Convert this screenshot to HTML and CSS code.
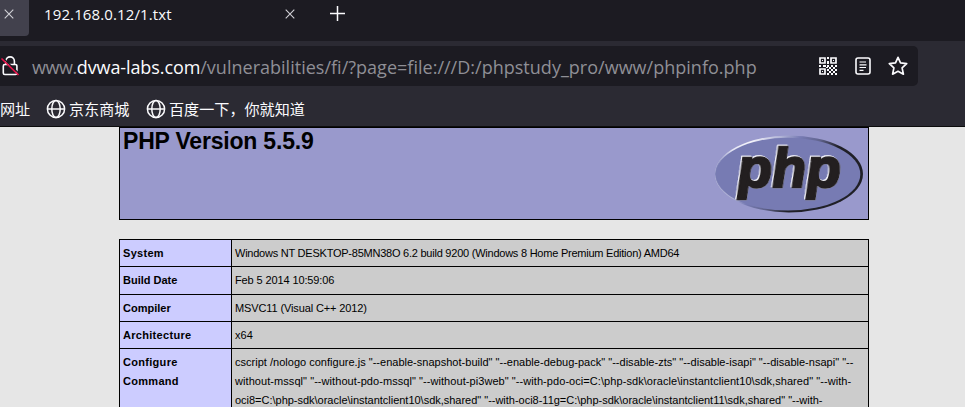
FILE: index.html
```html
<!DOCTYPE html>
<html lang="zh-CN">
<head>
<meta charset="utf-8">
<title>phpinfo()</title>
<link rel="stylesheet" href="styles.css">
</head>
<body>
<header class="browser">
  <div class="tabs">
    <div class="tab tab-active"><svg class="close" viewBox="0 0 10 10"><path d="M.7.7l8.6 8.6M9.3.7L.7 9.3"/></svg></div>
    <div class="tab tab-idle"><span class="tab-title">192.168.0.12/1.txt</span><svg class="close" viewBox="0 0 10 10"><path d="M.7.7l8.6 8.6M9.3.7L.7 9.3"/></svg></div>
    <svg class="plus" viewBox="0 0 15 15"><path d="M7.5 0v15M0 7.5h15"/></svg>
  </div>
  <div class="toolbar">
    <div class="address">
      <svg class="lock" viewBox="0 0 20 22"><path class="ink" d="M5.8 9V6.2a4.3 4.3 0 0 1 8.600 0V9M4.800 9.500h10.600a1.500 1.500 0 0 1 1.500 1.500v7a1.500 1.500 0 0 1-1.500 1.500h-10.600a1.500 1.500 0 0 1-1.500-1.500v-7a1.500 1.500 0 0 1 1.500-1.500z"/><path class="gap" d="M2.500 2.500l17 16.500"/><path class="cut" d="M1.500 3.500l17 16.500"/></svg>
      <div class="url"><span class="scheme">www.</span><span class="host">dvwa-labs.com</span><span class="path">/vulnerabilities/fi/?page=file:///D:/phpstudy_pro/www/phpinfo.php</span></div>
      <svg class="qr" viewBox="0 0 18 18"><g class="frame"><path d="M1 1h5v5H1zM12 1h5v5h-5zM1 12h5v5H1z"/></g><path class="dots" d="M3 3h1v1H3zM14 3h1v1h-1zM3 14h1v1H3zM8 0h2v2H8zM8 4h2v3H8zM0 8h2v2H0zM4 8h3v2H4zM8 8h2v2H8zM12 8h2v2h-2zM16 8h2v2h-2zM10 10h2v2h-2zM14 10h2v2h-2zM8 12h2v2H8zM12 12h2v2h-2zM16 12h2v2h-2zM10 14h2v2h-2zM14 14h2v2h-2zM8 16h2v2H8zM12 16h2v2h-2zM16 16h2v2h-2zM7 10h2v1H7z"/></svg>
      <svg class="reader" viewBox="0 0 16 18"><rect x="1" y="1" width="14" height="16" rx="2"/><path d="M4.500 5h6.500M4.500 7.800h7M4.500 10.500h6.500M4.500 13.300h4"/></svg>
      <svg class="star" viewBox="0 0 20 20"><path d="M10 1.300l2.500 5.600 6.200.7-4.600 4.200 1.300 6.400L10 15.300l-5.400 2.900 1.300-6.400L1.300 7.600l6.200-.7z"/></svg>
    </div>
    <nav class="bookmarks">
      <span class="bm bm1">网址</span>
      <span class="bm bm2"><svg class="globe" viewBox="0 0 20 20"><circle cx="10" cy="10" r="8.600"/><ellipse cx="10" cy="10" rx="4.200" ry="8.600"/><path d="M1.400 10h17.200"/></svg>京东商城</span>
      <span class="bm bm3"><svg class="globe" viewBox="0 0 20 20"><circle cx="10" cy="10" r="8.600"/><ellipse cx="10" cy="10" rx="4.200" ry="8.600"/><path d="M1.400 10h17.200"/></svg>百度一下，你就知道</span>
    </nav>
  </div>
</header>
<main class="page">
  <section class="banner">
    <h1>PHP Version 5.5.9</h1>
    <svg class="logo" viewBox="0 0 150 80">
      <defs>
        <linearGradient id="rim" gradientUnits="userSpaceOnUse" x1="20" y1="0" x2="120" y2="80"><stop offset="0" stop-color="#d8daee"/><stop offset=".14" stop-color="#f4f4fb"/><stop offset=".3" stop-color="#b0b3d6"/><stop offset=".42" stop-color="#777bb3"/><stop offset=".55" stop-color="#62658f"/><stop offset=".7" stop-color="#202027"/><stop offset="1" stop-color="#202027"/></linearGradient>
        <linearGradient id="fade" x1="0" y1="0" x2="1" y2="0"><stop offset="0" stop-color="#8185ba"/><stop offset=".12" stop-color="#8185ba" stop-opacity="0"/></linearGradient>
      </defs>
      <ellipse cx="75" cy="40" rx="74" ry="38.500" fill="url(#rim)"/>
      <ellipse cx="75" cy="40" rx="74" ry="38.500" fill="url(#fade)"/>
      <ellipse cx="74" cy="40.200" rx="72.300" ry="36.400" fill="#777bb3"/>
      <text class="word" transform="translate(24.500 53) skewX(3)" textLength="103" lengthAdjust="spacingAndGlyphs">php</text>
    </svg>
  </section>
  <table class="info">
    <tr><th class="wide">System</th><td class="system">Windows NT DESKTOP-85MN38O 6.2 build 9200 (Windows 8 Home Premium Edition) AMD64</td></tr>
    <tr class="tall"><th>Build Date</th><td class="snug">Feb 5 2014 10:59:06</td></tr>
    <tr><th>Compiler</th><td class="snug">MSVC11 (Visual C++ 2012)</td></tr>
    <tr><th class="wide">Architecture</th><td>x64</td></tr>
    <tr><th class="wide">Configure<br>Command</th><td>cscript /nologo configure.js "--enable-snapshot-build" "--enable-debug-pack" "--disable-zts" "--disable-isapi" "--disable-nsapi" "--<br><span class="loose">without-mssql" "--without-pdo-mssql" "--without-pi3web" "--with-pdo-oci=C:\php-sdk\oracle\instantclient10\sdk,shared" "--with-</span><br><span class="close-set">oci8=C:\php-sdk\oracle\instantclient10\sdk,shared" "--with-oci8-11g=C:\php-sdk\oracle\instantclient11\sdk,shared" "--with-</span></td></tr>
  </table>
</main>
</body>
</html>
```
FILE: styles.css
```css
* { box-sizing: border-box; }
html, body { height: 407px; overflow: hidden; }
body { margin: 0; background: #e6e6e6; color: #000; font-family: "Liberation Sans", sans-serif; }
svg { display: block; flex: none; fill: none; stroke: #fbfbfe; overflow: visible; }
.browser { height: 127px; background: #2b2a33; border-bottom: 1px solid #0c0c0d; color: #fbfbfe; font-family: "Open Sans", "Noto Sans CJK SC", sans-serif; }
.tabs { height: 41px; background: #1c1b22; display: flex; align-items: flex-start; }
.tab { display: flex; align-items: center; }
.tab-active { width: 29px; height: 36px; padding: 0 0 8px 4px; background: #42414d; border-radius: 0 0 4px 0; }
.tab-idle { width: 266px; height: 28px; padding-left: 15px; justify-content: space-between; }
.tab-title { font-size: 15px; line-height: 20px; letter-spacing: .12px; white-space: nowrap; }
.close { width: 10px; height: 10px; stroke: #d0d0d6; stroke-width: 1.1; }
.plus { width: 15px; height: 15px; margin: 6px 0 0 35px; stroke-width: 1.5; }
.toolbar { padding-top: 5px; }
.address { width: 918px; height: 40px; background: #1c1b22; border-radius: 0 5px 5px 0; display: flex; align-items: center; }
.lock { width: 20px; height: 22px; margin-right: 12px; }
.lock path { stroke-width: 1.6; }
.lock .gap { stroke: #1c1b22; stroke-width: 1.4; }
.lock .cut { stroke: #e8134b; stroke-width: 1.7; }
.url { width: 787px; padding-top: 1px; font-size: 18px; line-height: 24px; white-space: nowrap; color: #8f8f96; }
.scheme { letter-spacing: -.45px; }
.host { color: #fbfbfe; letter-spacing: -.1px; }
.path { letter-spacing: .015px; }
.qr { width: 18px; height: 18px; }
.qr .frame { stroke-width: 1.7; }
.qr .dots { fill: #fbfbfe; stroke: none; }
.reader { width: 16px; height: 18px; margin-left: 18px; stroke-width: 1.6; }
.reader path { stroke-width: 1.2; }
.star { width: 20px; height: 20px; margin-left: 17px; stroke-width: 1.7; stroke-linejoin: round; }
.bookmarks { height: 40px; padding-top: 4px; display: flex; align-items: center; font-family: "Noto Sans CJK SC", sans-serif; font-size: 15.1px; line-height: 22px; white-space: nowrap; }
.bm { display: flex; align-items: center; }
.bm1 { width: 46px; }
.bm2 { width: 100px; }
.globe { width: 20px; height: 20px; margin: 2px 3px 0 0; stroke-width: 1.5; }
.page { width: 750px; margin-left: 119px; }
.banner { height: 93px; border: 1px solid #000; background: #9999cc; display: flex; justify-content: space-between; padding: 0 4px 0 3px; }
h1 { margin: 0; font-size: 23px; line-height: 27px; letter-spacing: -.2px; white-space: nowrap; }
.logo { width: 150px; height: 80px; margin-top: 6px; }
.logo ellipse { stroke: none; }
.word { font: italic bold 55px "Liberation Sans", sans-serif; fill: #231f20; stroke: #231f20; stroke-width: 2.6px; filter: drop-shadow(.7px .7px 0 #f4f4fa) drop-shadow(-.7px -.7px 0 #f4f4fa); }
.info { width: 750px; margin-top: 19px; border-collapse: collapse; table-layout: fixed; font-size: 11px; line-height: 19px; }
th, td { border: 1px solid #000; padding: 4px 3px 3px; vertical-align: top; text-align: left; white-space: nowrap; }
th { width: 112px; background: #ccccff; }
td { background: #cccccc; letter-spacing: .015px; }
.tall th, .tall td { padding-bottom: 4px; }
.wide { letter-spacing: .3px; }
.system { letter-spacing: -.235px; }
.snug { letter-spacing: -.12px; }
.loose { letter-spacing: .065px; }
.close-set { letter-spacing: -.015px; }
```
